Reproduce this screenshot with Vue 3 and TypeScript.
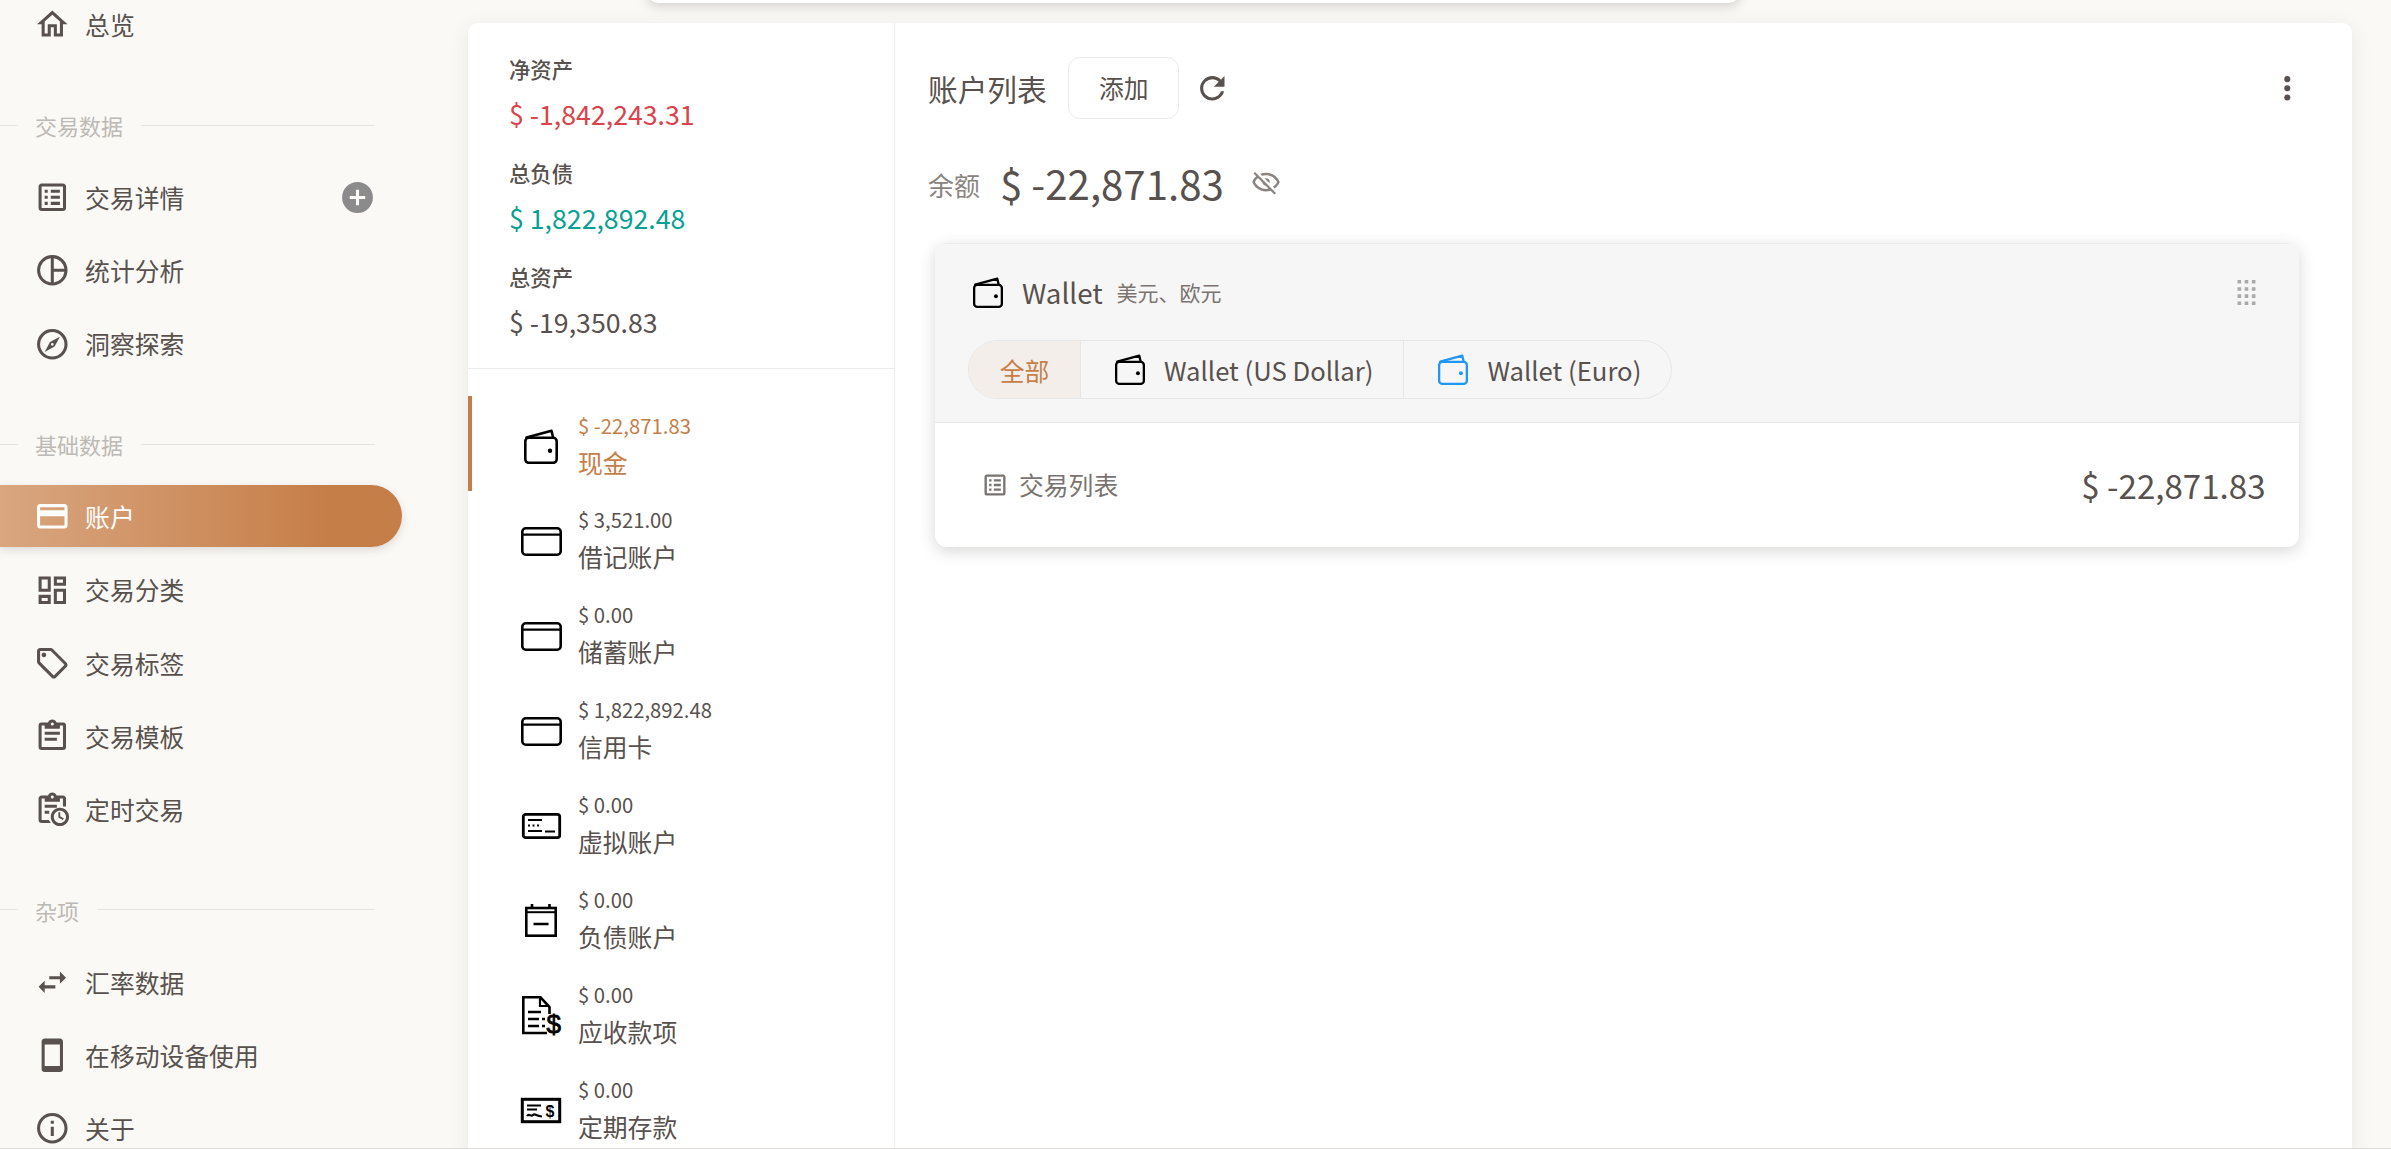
<script setup lang="ts">
interface NavItem { label: string; icon: string; active?: boolean; plus?: boolean }
interface NavSection { title: string; items: NavItem[] }
interface AccountRow { amount: string; label: string; icon: string; active?: boolean }

const icons: Record<string, string> = {
  home: 'M12 5.69L17 10.19V18H15V12H9V18H7V10.19L12 5.69M12 3L2 12H5V20H11V14H13V20H19V12H22',
  list: 'M11 15H17V17H11V15M9 7H7V9H9V7M11 13H17V11H11V13M11 9H17V7H11V9M9 11H7V13H9V11M21 5V19C21 20.1 20.1 21 19 21H5C3.9 21 3 20.1 3 19V5C3 3.9 3.9 3 5 3H19C20.1 3 21 3.9 21 5M19 5H5V19H19V5M9 15H7V17H9V15Z',
  pie: 'M12 2A10 10 0 1 0 12 22A10 10 0 1 0 12 2M11 4.06V19.94A8 8 0 0 1 11 4.06M13 4.06A8 8 0 0 1 19.94 11H13V4.06M13 13H19.94A8 8 0 0 1 13 19.94V13Z',
  compass: 'M7,17L10.5,10.5L17,7L13.5,13.5L7,17M12,11.1A0.9,0.9 0 0,0 11.1,12A0.9,0.9 0 0,0 12,12.9A0.9,0.9 0 0,0 12.9,12A0.9,0.9 0 0,0 12,11.1M12,2A10,10 0 0,1 22,12A10,10 0 0,1 12,22A10,10 0 0,1 2,12A10,10 0 0,1 12,2M12,4A8,8 0 0,0 4,12A8,8 0 0,0 12,20A8,8 0 0,0 20,12A8,8 0 0,0 12,4Z',
  card: 'M20 4H4C2.89 4 2 4.89 2 6V18C2 19.11 2.89 20 4 20H20C21.11 20 22 19.11 22 18V6C22 4.89 21.11 4 20 4M20 18H4V12H20V18M20 8H4V6H20V8Z',
  dashboard: 'M19,5V7H15V5H19M9,5V11H5V5H9M19,13V19H15V13H19M9,17V19H5V17H9M21,3H13V9H21V3M11,3H3V13H11V3M21,11H13V21H21V11M11,15H3V21H11V15Z',
  tag: 'M21.41 11.58L12.41 2.58C12.05 2.22 11.55 2 11 2H4C2.9 2 2 2.9 2 4V11C2 11.55 2.22 12.05 2.59 12.42L11.59 21.42C11.95 21.78 12.45 22 13 22S14.05 21.78 14.41 21.41L21.41 14.41C21.78 14.05 22 13.55 22 13C22 12.45 21.77 11.94 21.41 11.58M13 20L4 11V4H11V3.99L20 12.99L13 20M6.5 5C7.33 5 8 5.67 8 6.5S7.33 8 6.5 8 5 7.33 5 6.5 5.67 5 6.5 5Z',
  clipboard: 'M19,3H14.82C14.4,1.84 13.3,1 12,1C10.7,1 9.6,1.84 9.18,3H5A2,2 0 0,0 3,5V19A2,2 0 0,0 5,21H19A2,2 0 0,0 21,19V5A2,2 0 0,0 19,3M12,3A1,1 0 0,1 13,4A1,1 0 0,1 12,5A1,1 0 0,1 11,4A1,1 0 0,1 12,3M7,7H17V5H19V19H5V5H7V7M17,11H7V9H17V11M15,15H7V13H15V15Z',
  clipboardClock: 'M19 3H14.82C14.4 1.84 13.3 1 12 1S9.6 1.84 9.18 3H5C3.9 3 3 3.9 3 5V19C3 20.1 3.9 21 5 21H11.1C10.5 20.4 10.1 19.7 9.8 19H5V5H7V7H17V5H19V10.1H21V5C21 3.9 20.1 3 19 3M12 3C12.55 3 13 3.45 13 4S12.55 5 12 5 11 4.55 11 4 11.45 3 12 3M17 11C13.7 11 11 13.7 11 17S13.7 23 17 23 23 20.3 23 17 20.3 11 17 11M17 21C14.8 21 13 19.2 13 17S14.8 13 17 13 21 14.8 21 17 19.2 21 17 21M16 14V17.3L18.9 19L19.6 18L17.2 16.6V14H16M7 9H15V11H7V9M7 13H10V15H7V13Z',
  swap: 'M21,9L17,5V8H10V10H17V13M7,11L3,15L7,19V16H14V14H7V11Z',
  phone: 'M17,19H7V5H17M17,1H7C5.89,1 5,1.89 5,3V21A2,2 0 0,0 7,23H17A2,2 0 0,0 19,21V3C19,1.89 18.1,1 17,1Z',
  info: 'M11,9H13V7H11M12,20C7.59,20 4,16.41 4,12C4,7.59 7.59,4 12,4C16.41,4 20,7.59 20,12C20,16.41 16.41,20 12,20M12,2A10,10 0 0,0 2,12A10,10 0 0,0 12,22A10,10 0 0,0 22,12A10,10 0 0,0 12,2M11,17H13V11H11V17Z',
  plus: 'M17,13H13V17H11V13H7V11H11V7H13V11H17M12,2A10,10 0 0,0 2,12A10,10 0 0,0 12,22A10,10 0 0,0 22,12A10,10 0 0,0 12,2Z',
  refresh: 'M17.65,6.35C16.2,4.9 14.21,4 12,4A8,8 0 0,0 4,12A8,8 0 0,0 12,20C15.73,20 18.84,17.45 19.73,14H17.65C16.83,16.33 14.61,18 12,18A6,6 0 0,1 6,12A6,6 0 0,1 12,6C13.66,6 15.14,6.69 16.22,7.78L13,11H20V4L17.65,6.35Z',
  dots: 'M12,16A2,2 0 0,1 14,18A2,2 0 0,1 12,20A2,2 0 0,1 10,18A2,2 0 0,1 12,16M12,10A2,2 0 0,1 14,12A2,2 0 0,1 12,14A2,2 0 0,1 10,12A2,2 0 0,1 12,10M12,4A2,2 0 0,1 14,6A2,2 0 0,1 12,8A2,2 0 0,1 10,6A2,2 0 0,1 12,4Z',
  eyeOff: 'M2,5.27L3.28,4L20,20.72L18.73,22L15.65,18.92C14.5,19.3 13.28,19.5 12,19.5C7,19.5 2.73,16.39 1,12C1.69,10.24 2.79,8.69 4.19,7.46L2,5.27M12,9A3,3 0 0,1 15,12C15,12.35 14.94,12.69 14.83,13L11,9.17C11.31,9.06 11.65,9 12,9M12,4.5C17,4.5 21.27,7.61 23,12C22.18,14.08 20.79,15.88 19,17.19L17.58,15.76C18.94,14.82 20.06,13.54 20.82,12C19.17,8.64 15.76,6.5 12,6.5C10.91,6.5 9.84,6.68 8.84,7L7.3,5.47C8.74,4.85 10.33,4.5 12,4.5M3.18,12C4.83,15.36 8.24,17.5 12,17.5C12.69,17.5 13.37,17.43 14,17.29L11.72,15C10.29,14.85 9.15,13.71 9,12.28L5.6,8.87C4.61,9.72 3.78,10.78 3.18,12Z',
  drag: 'M7 19V17H9V19H7M11 19V17H13V19H11M15 19V17H17V19H15M7 15V13H9V15H7M11 15V13H13V15H11M15 15V13H17V15H15M7 11V9H9V11H7M11 11V9H13V11H11M15 11V9H17V11H15M7 7V5H9V7H7M11 7V5H13V7H11M15 7V5H17V7H15Z',
}

const topItem: NavItem = { label: '总览', icon: 'home' }
const sections: NavSection[] = [
  { title: '交易数据', items: [
    { label: '交易详情', icon: 'list', plus: true },
    { label: '统计分析', icon: 'pie' },
    { label: '洞察探索', icon: 'compass' },
  ] },
  { title: '基础数据', items: [
    { label: '账户', icon: 'card', active: true },
    { label: '交易分类', icon: 'dashboard' },
    { label: '交易标签', icon: 'tag' },
    { label: '交易模板', icon: 'clipboard' },
    { label: '定时交易', icon: 'clipboardClock' },
  ] },
  { title: '杂项', items: [
    { label: '汇率数据', icon: 'swap' },
    { label: '在移动设备使用', icon: 'phone' },
    { label: '关于', icon: 'info' },
  ] },
]

const summary = [
  { label: '净资产', value: '$ -1,842,243.31', tone: 'neg' },
  { label: '总负债', value: '$ 1,822,892.48', tone: 'pos' },
  { label: '总资产', value: '$ -19,350.83', tone: '' },
]

const accounts: AccountRow[] = [
  { amount: '$ -22,871.83', label: '现金', icon: 'wallet', active: true },
  { amount: '$ 3,521.00', label: '借记账户', icon: 'creditcard' },
  { amount: '$ 0.00', label: '储蓄账户', icon: 'creditcard' },
  { amount: '$ 1,822,892.48', label: '信用卡', icon: 'creditcard' },
  { amount: '$ 0.00', label: '虚拟账户', icon: 'virtual' },
  { amount: '$ 0.00', label: '负债账户', icon: 'debt' },
  { amount: '$ 0.00', label: '应收款项', icon: 'receivable' },
  { amount: '$ 0.00', label: '定期存款', icon: 'deposit' },
]
</script>

<template>
  <div class="app">
    <svg class="defs" aria-hidden="true">
      <symbol id="wallet-sym" viewBox="0 0 34 35">
        <g fill="none" stroke="currentColor" stroke-width="2.6" stroke-linejoin="round" stroke-linecap="round">
          <rect x="1.3" y="8.8" width="31.4" height="25" rx="3.5" />
          <path d="M2.5 8.5L27.5 1.8L29 8" />
        </g>
        <circle cx="26" cy="21.7" r="2.2" fill="currentColor" />
      </symbol>
    </svg>

    <div class="topbar"></div>

    <aside class="sidebar">
      <a class="nav-item">
        <svg class="nav-icon" viewBox="0 0 24 24"><path :d="icons[topItem.icon]" /></svg>
        <span>{{ topItem.label }}</span>
      </a>
      <template v-for="section in sections" :key="section.title">
        <div class="section-head">
          <i class="rule short"></i>
          <span>{{ section.title }}</span>
          <i class="rule long"></i>
        </div>
        <a v-for="item in section.items" :key="item.label" class="nav-item" :class="{ active: item.active }">
          <svg class="nav-icon" viewBox="0 0 24 24"><path :d="icons[item.icon]" /></svg>
          <span>{{ item.label }}</span>
          <svg v-if="item.plus" class="plus-icon" viewBox="0 0 24 24"><path :d="icons.plus" /></svg>
        </a>
      </template>
    </aside>

    <main class="main">
      <section class="card">
        <div class="left">
          <div class="summary">
            <div v-for="s in summary" :key="s.label" class="sum-group">
              <div class="sum-label">{{ s.label }}</div>
              <div class="sum-value" :class="s.tone">{{ s.value }}</div>
            </div>
          </div>
          <div class="rows">
            <div v-for="a in accounts" :key="a.label" class="row" :class="{ active: a.active }">
              <div class="row-icon">
                <svg v-if="a.icon === 'wallet'" class="ic-wallet"><use href="#wallet-sym" /></svg>
                <svg v-else-if="a.icon === 'creditcard'" class="ic-card" viewBox="0 0 41 29" fill="none" stroke="currentColor">
                  <rect x="1.3" y="1.3" width="38.4" height="26.4" rx="3.5" stroke-width="2.6" />
                  <path d="M2 7.6H39" stroke-width="2.2" />
                </svg>
                <svg v-else-if="a.icon === 'virtual'" class="ic-virtual" viewBox="0 0 39 26" fill="none" stroke="currentColor">
                  <rect x="1.3" y="1.3" width="36.4" height="23.4" rx="2.4" stroke-width="2.8" />
                  <path d="M6 7H20M6 12.5H8M10.5 12.5H12.5M15 12.5H17M6 18H20M23 18.5H33" stroke-width="2.1" />
                </svg>
                <svg v-else-if="a.icon === 'debt'" class="ic-debt" viewBox="0 0 32 33" fill="none" stroke="currentColor">
                  <rect x="1.3" y="4" width="29.4" height="27.7" stroke-width="2.6" />
                  <path d="M2 8.2H30" stroke-width="2" />
                  <path d="M7 0V5M24.5 0V5M8.5 20H23.5" stroke-width="2.6" />
                </svg>
                <svg v-else-if="a.icon === 'receivable'" class="ic-receivable" viewBox="0 0 39 40" fill="none" stroke="currentColor">
                  <path d="M25 37H1.3V1.3H18.5L27.5 11V18" stroke-width="2.6" />
                  <path d="M18 1.5V10H27" stroke-width="2.2" />
                  <path d="M6 16H19M6 23H17M20 23H23M6 30H17M20 30H23" stroke-width="2.4" />
                  <text x="24.5" y="36.5" class="ic-dollar big">$</text>
                </svg>
                <svg v-else class="ic-deposit" viewBox="0 0 40 25" fill="none" stroke="currentColor">
                  <rect x="1.3" y="1.3" width="37.4" height="22.4" stroke-width="3" />
                  <path d="M6 7.5H20M6 11.5H16" stroke-width="2.2" />
                  <path d="M6 18C8 15 10 19 12 17S15 18 21 18.5" stroke-width="2.2" />
                  <text x="24.5" y="18.5" class="ic-dollar">$</text>
                </svg>
              </div>
              <div class="row-text">
                <div class="row-amount">{{ a.amount }}</div>
                <div class="row-label">{{ a.label }}</div>
              </div>
            </div>
          </div>
        </div>

        <div class="right">
          <div class="title-row">
            <span class="title">账户列表</span>
            <button class="add-btn"><span>添加</span></button>
            <svg class="refresh" viewBox="0 0 24 24"><path :d="icons.refresh" /></svg>
            <svg class="kebab" viewBox="0 0 24 24"><path :d="icons.dots" /></svg>
          </div>
          <div class="balance-row">
            <span class="bal-label">余额</span>
            <span class="bal-value">$ -22,871.83</span>
            <svg class="eye" viewBox="0 0 24 24"><path :d="icons.eyeOff" /></svg>
          </div>

          <article class="acct">
            <header class="acct-head">
              <div class="acct-title">
                <svg class="head-wallet"><use href="#wallet-sym" /></svg>
                <span class="acct-name">Wallet</span>
                <span class="acct-sub">美元、欧元</span>
                <svg class="drag" viewBox="0 0 24 24"><path :d="icons.drag" /></svg>
              </div>
              <div class="tabs">
                <div class="tab all">全部</div>
                <div class="tab">
                  <svg class="tab-wallet"><use href="#wallet-sym" /></svg>
                  <span>Wallet (US Dollar)</span>
                </div>
                <div class="tab last">
                  <svg class="tab-wallet blue"><use href="#wallet-sym" /></svg>
                  <span>Wallet (Euro)</span>
                </div>
              </div>
            </header>
            <div class="acct-body">
              <svg class="tx-icon" viewBox="0 0 24 24"><path :d="icons.list" /></svg>
              <span class="tx-label">交易列表</span>
              <span class="tx-value">$ -22,871.83</span>
            </div>
          </article>
        </div>
      </section>
    </main>
  </div>
</template>

<style>
html, body { margin: 0; padding: 0; overflow: hidden; background: #faf9f6; }
</style>

<style scoped>
.app {
  position: relative;
  display: flex;
  width: 2391px;
  height: 1149px;
  box-sizing: border-box;
  overflow: hidden;
  border-bottom: 1px solid #dedddb;
  background: #faf9f6;
  color: #58514d;
  font-family: "Noto Sans CJK SC", "Noto Sans", sans-serif;
  font-size: 24.8px;
}
.defs { position: absolute; width: 0; height: 0; }
.topbar {
  position: absolute;
  left: 647px;
  top: -20px;
  width: 1093px;
  height: 23px;
  background: #fff;
  border-radius: 12px;
  box-shadow: 0 3px 12px rgba(70, 60, 50, .22);
  z-index: 2;
}

.sidebar {
  flex: 0 0 468px;
  width: 468px;
  margin-top: -12.4px;
  display: flex;
  flex-direction: column;
}
.nav-item {
  position: relative;
  flex: 0 0 73.2px;
  height: 73.2px;
  box-sizing: border-box;
  display: flex;
  align-items: center;
  padding-left: 33.5px;
  width: 402px;
}
.nav-item.active {
  flex: 0 0 62px;
  height: 62px;
  margin: 5.6px 0;
  color: #fff;
  background: linear-gradient(90deg, #d9a680 0, #c67e48 82%);
  border-radius: 0 31px 31px 0;
  box-shadow: 0 3px 9px rgba(70, 60, 50, .16);
}
.nav-icon {
  width: 36.6px;
  height: 36.6px;
  margin-right: 15px;
  margin-top: 1px;
  fill: currentColor;
  flex: none;
}
.plus-icon {
  position: absolute;
  left: 339px;
  top: 19px;
  width: 37px;
  height: 37px;
  fill: #8b8b8b;
}
.section-head {
  flex: 0 0 99.6px;
  height: 99.6px;
  box-sizing: border-box;
  padding-top: 29px;
  display: flex;
  align-items: center;
  width: 375px;
  color: #bdb9b5;
  font-size: 22px;
}
.section-head span { margin-left: -1px; }
.rule { display: block; height: 1px; background: #e6e4e1; margin-top: 0; }
.rule.short { width: 18px; margin-right: 18px; flex: none; }
.rule.long { flex: 1; margin-left: 18px; }

.main {
  flex: 1;
  min-width: 0;
  padding: 23px 39px 0 0;
}
.card {
  display: flex;
  height: 1200px;
  background: #fff;
  border-radius: 10px;
  box-shadow: 0 4px 20px rgba(70, 60, 50, .09);
  overflow: hidden;
}
.left {
  flex: 0 0 427px;
  width: 427px;
  box-sizing: border-box;
  border-right: 1px solid #ececec;
}
.summary {
  padding: 30.5px 0 0 41px;
  height: 346px;
  box-sizing: border-box;
  border-bottom: 1px solid #ececec;
}
.sum-group { margin-bottom: 24px; }
.sum-group:last-child { margin-bottom: 0; }
.sum-label { font-size: 21.35px; line-height: 30px; font-weight: 500; }
.sum-value { font-size: 26.7px; line-height: 40px; margin-top: 10px; }
.sum-value.neg { color: #d8434c; }
.sum-value.pos { color: #07a193; }

.rows { padding-top: 27px; }
.row {
  position: relative;
  display: flex;
  height: 94.9px;
  padding-left: 36px;
  box-sizing: border-box;
}
.row.active { color: #c67e48; }
.row.active::before {
  content: "";
  position: absolute;
  left: 0;
  top: 0;
  bottom: 0;
  width: 4px;
  background: #c67e48;
}
.row-icon {
  flex: 0 0 74px;
  display: flex;
  align-items: center;
  justify-content: center;
  padding-top: 6px;
  box-sizing: border-box;
  color: #000;
}
.row-icon svg { overflow: visible; }
.ic-wallet { width: 34px; height: 35px; }
.ic-card { width: 41px; height: 29px; }
.ic-virtual { width: 39px; height: 26px; }
.ic-debt { width: 32px; height: 33px; }
.ic-receivable { width: 39px; height: 40px; }
.ic-deposit { width: 40px; height: 25px; }
.ic-dollar {
  font-family: "Liberation Sans", sans-serif;
  font-weight: 700;
  font-size: 16px;
  fill: currentColor;
  stroke: none;
}
.ic-dollar.big { font-size: 26px; font-weight: 400; stroke: currentColor; stroke-width: .8px; }
.row-text { padding-top: 13.5px; }
.row-amount { font-size: 20.3px; line-height: 30px; }
.row-label { font-size: 24.8px; line-height: 38px; margin-top: 3px; }

.right { flex: 1; min-width: 0; padding-left: 33px; }
.title-row {
  display: flex;
  align-items: center;
  height: 62px;
  margin-top: 34px;
  padding-right: 46px;
}
.title { font-size: 29.7px; margin-right: 21px; margin-top: 1px; flex: none; }
.add-btn {
  flex: none;
  width: 111px;
  height: 62px;
  background: #fff;
  border: 1px solid #ececec;
  border-radius: 12px;
  color: inherit;
  font: inherit;
  font-size: 24.8px;
  padding: 0 0 2px 1px;
}
.refresh { width: 36.6px; height: 36.6px; margin-left: 15px; fill: currentColor; }
.kebab { width: 36.6px; height: 36.6px; margin-left: auto; fill: currentColor; }
.balance-row {
  display: flex;
  align-items: center;
  height: 60px;
  margin-top: 34.5px;
}
.bal-label { font-size: 26px; color: #8a8480; margin-right: 20px; margin-top: 2px; }
.bal-value { font-size: 40.2px; line-height: 60px; margin-top: -2px; }
.eye { width: 30px; height: 30px; margin-left: 27px; fill: #8a8480; margin-top: -3px; }

.acct {
  margin: 29.5px 54px 0 7px;
  width: 1364px;
  box-sizing: border-box;
  border-radius: 12px;
  background: #fff;
  box-shadow: 0 4px 16px rgba(60, 55, 50, .2);
  overflow: hidden;
}
.acct-head {
  height: 180px;
  box-sizing: border-box;
  background: #f6f6f6;
  border-bottom: 1px solid #e9e9e9;
  border-top: 1px solid #ececec;
  padding: 0 0 0 33px;
}
.acct-title {
  display: flex;
  align-items: center;
  height: 96px;
  padding-left: 5px;
}
.head-wallet { width: 30px; height: 31px; color: #000; margin-right: 19px; flex: none; }
.acct-name { font-size: 27.7px; margin-right: 14px; }
.acct-sub { font-size: 21px; color: #7a736f; }
.drag { width: 43px; height: 43px; margin-left: auto; margin-right: 31.5px; fill: #a9a9a9; }
.tabs {
  display: inline-flex;
  height: 59px;
  box-sizing: border-box;
  border: 1px solid #e6e6e6;
  border-radius: 30px;
  overflow: hidden;
}
.tab {
  display: flex;
  align-items: center;
  height: 100%;
  padding: 0 30px 0 34px;
  border-right: 1px solid #e6e6e6;
  font-size: 25.7px;
}
.tab.last { border-right: none; }
.tab.all {
  width: 112px;
  box-sizing: border-box;
  justify-content: center;
  padding: 0;
  color: #c67e48;
  background: #f3eeea;
  font-size: 24.8px;
}
.tab-wallet { width: 30px; height: 31px; color: #000; margin-right: 19px; flex: none; }
.tab-wallet.blue { color: #2196f3; }
.acct-body {
  display: flex;
  align-items: center;
  height: 124px;
  padding: 0 33.5px 0 46px;
}
.tx-icon { width: 28px; height: 28px; fill: #7a736f; margin-right: 10px; }
.tx-label { font-size: 24.8px; color: #7a736f; margin-top: -2px; }
.tx-value { font-size: 33.1px; margin-left: auto; }
</style>
